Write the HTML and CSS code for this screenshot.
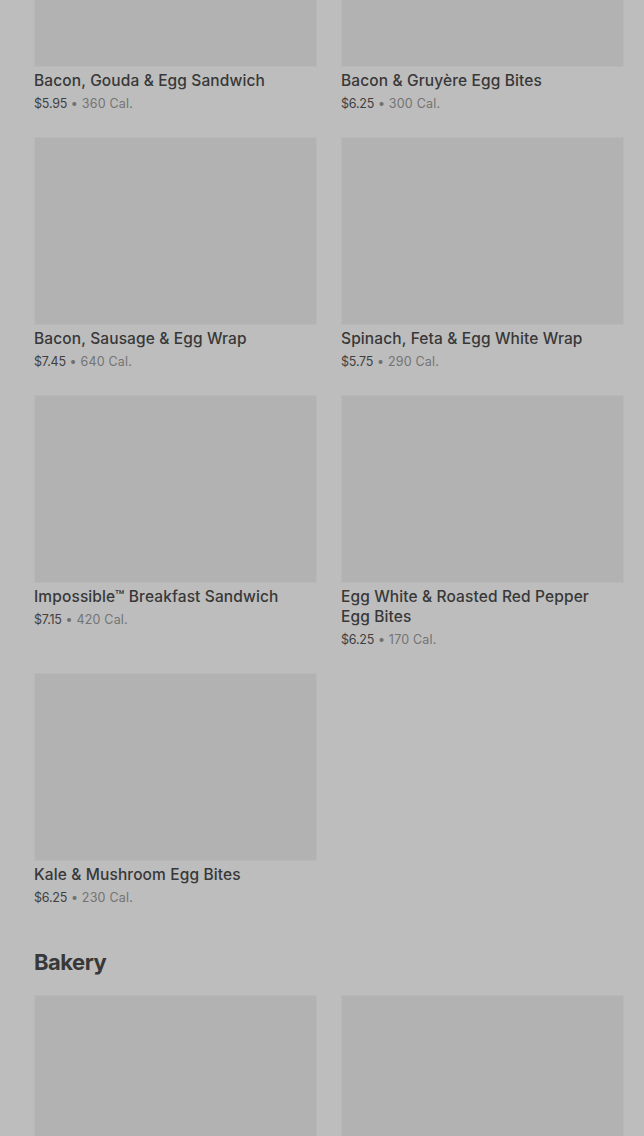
FILE: index.html
```html
<!DOCTYPE html>
<html lang="en">
<head>
  <meta charset="UTF-8" />
  <meta name="viewport" content="width=device-width, initial-scale=1.0" />
  <title>Menu</title>
  <link rel="stylesheet" href="styles.css">
</head>
<body>
  <div class="page">
    <!-- Hot breakfast (scrolled) -->
    <div class="grid first">
      <div class="item">
        <div class="thumb"></div>
        <h3>Bacon, Gouda &amp; Egg Sandwich</h3>
        <p class="meta"><span class="price">$5.95</span> • <span class="cal">360 Cal.</span></p>
      </div>
      <div class="item">
        <div class="thumb"></div>
        <h3>Bacon &amp; Gruyère Egg Bites</h3>
        <p class="meta"><span class="price">$6.25</span> • <span class="cal">300 Cal.</span></p>
      </div>
      <div class="item">
        <div class="thumb"></div>
        <h3>Bacon, Sausage &amp; Egg Wrap</h3>
        <p class="meta"><span class="price">$7.45</span> • <span class="cal">640 Cal.</span></p>
      </div>
      <div class="item">
        <div class="thumb"></div>
        <h3>Spinach, Feta &amp; Egg White Wrap</h3>
        <p class="meta"><span class="price">$5.75</span> • <span class="cal">290 Cal.</span></p>
      </div>
      <div class="item">
        <div class="thumb"></div>
        <h3>Impossible™ Breakfast Sandwich</h3>
        <p class="meta"><span class="price">$7.15</span> • <span class="cal">420 Cal.</span></p>
      </div>
      <div class="item">
        <div class="thumb"></div>
        <h3>Egg White &amp; Roasted Red Pepper Egg Bites</h3>
        <p class="meta"><span class="price">$6.25</span> • <span class="cal">170 Cal.</span></p>
      </div>
      <div class="item">
        <div class="thumb"></div>
        <h3>Kale &amp; Mushroom Egg Bites</h3>
        <p class="meta"><span class="price">$6.25</span> • <span class="cal">230 Cal.</span></p>
      </div>
    </div>

    <!-- Bakery -->
    <h2 class="section-title">Bakery</h2>
    <div class="grid">
      <div class="item">
        <div class="thumb"></div>
      </div>
      <div class="item">
        <div class="thumb"></div>
      </div>
    </div>
  </div>
</body>
</html>
```

FILE: styles.css
```css
body {
  margin: 0;
  background: #bdbdbd;
  font-family: 'Inter', 'Noto Sans', sans-serif;
  color: #3b3b3b;
  overflow: hidden;
}
.page {
  padding: 0 20px 0 34px;
}
.grid {
  display: grid;
  grid-template-columns: 283px 283px;
  column-gap: 24px;
  row-gap: 23px;
}
.grid.first { margin-top: -121px; }
.thumb {
  height: 186px;
  background: #b2b2b2;
  border: 1px solid #b8b8b8;
}
.item h3 {
  margin: 4px 0 0;
  padding-right: 16px;
  font-size: 15.5px;
  line-height: 20px;
  font-weight: 500;
  color: #383838;
  letter-spacing: 0.12px;
}
.meta {
  margin: 3px 0 0;
  font-size: 12.5px;
  line-height: 20px;
  color: #707070;
  letter-spacing: 0.2px;
}
.price { color: #3f3f3f; letter-spacing: -0.2px; }
.cal { color: #737373; }
.section-title {
  margin: 40px 0 19px;
  font-size: 22px;
  line-height: 28px;
  font-weight: 700;
  letter-spacing: -0.5px;
  color: #383838;
}
```
